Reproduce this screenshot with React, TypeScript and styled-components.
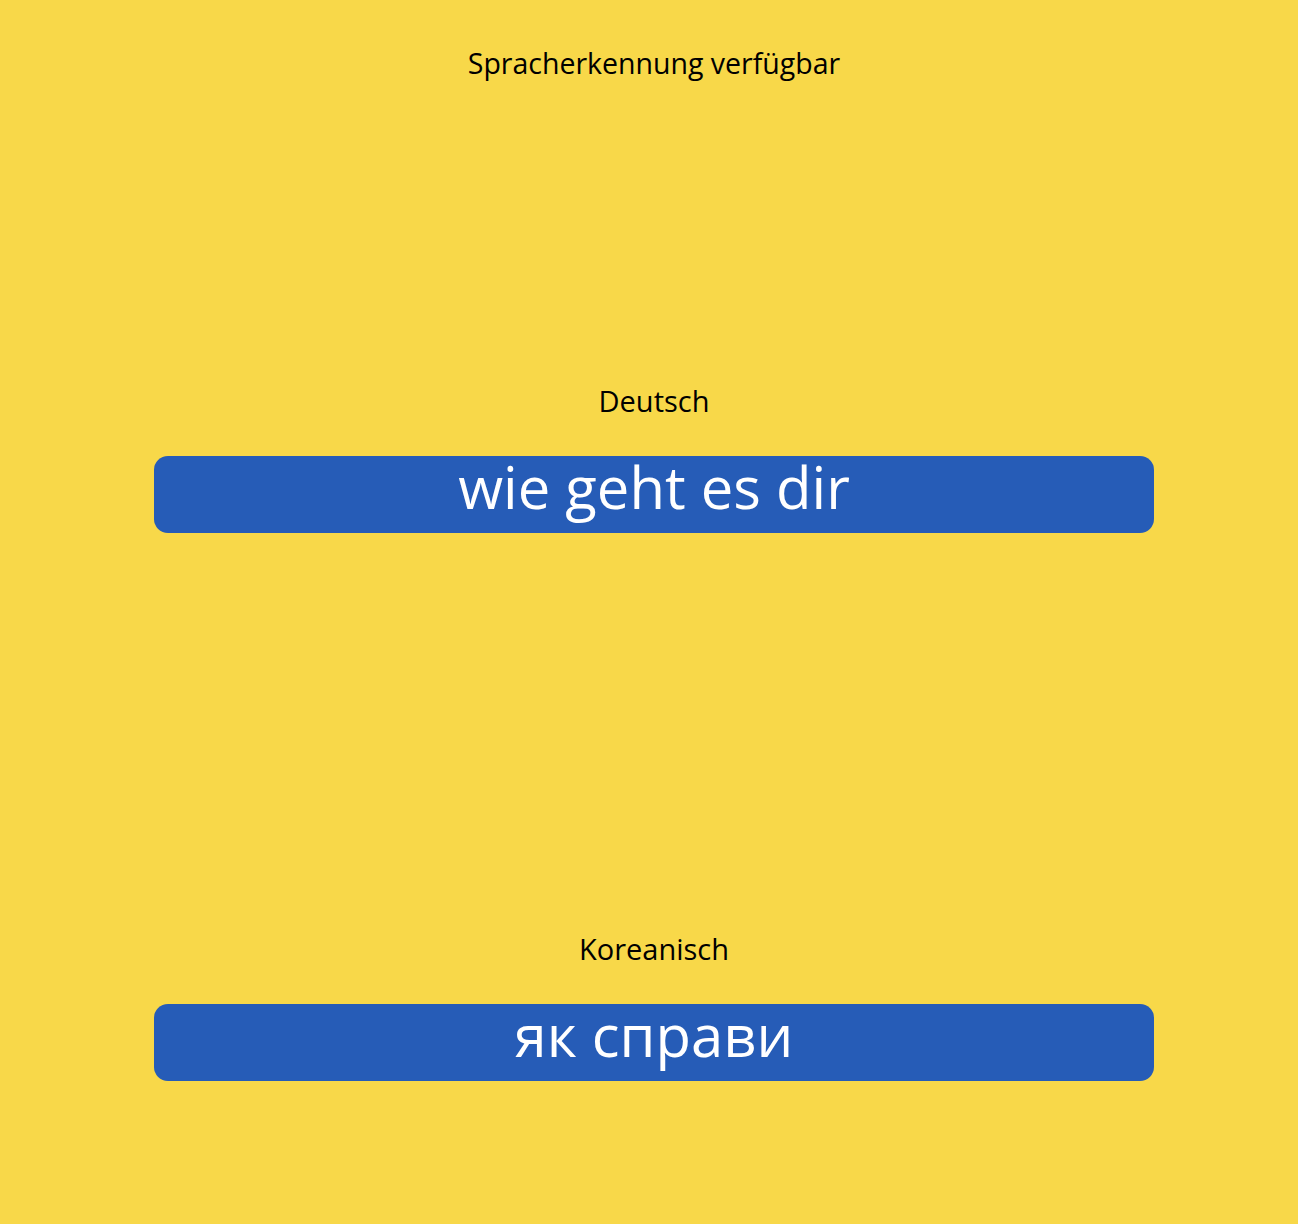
import styled, { createGlobalStyle } from 'styled-components'

const GlobalStyle = createGlobalStyle`
  html, body {
    margin: 0;
    padding: 0;
    background-color: #f8d849;
  }
  body {
    font-family: 'Open Sans', 'Noto Sans', 'Noto Sans CJK KR', sans-serif;
  }
`

const Page = styled.main`
  display: flex;
  flex-direction: column;
  align-items: center;
  min-height: 1224px;
  padding: 46px 0 0 10px;
  box-sizing: border-box;
  color: #000;
`

const Status = styled.h1`
  margin: 0;
  font-size: 28.5px;
  font-weight: 400;
  line-height: 34px;
`

const Section = styled.section<{ $gap: number }>`
  display: flex;
  flex-direction: column;
  align-items: center;
  gap: 38px;
  width: 1000px;
  margin-top: ${p => p.$gap}px;
`

const Label = styled.h2`
  margin: 0;
  font-size: 29px;
  font-weight: 400;
  line-height: 34px;
`

const Phrase = styled.div`
  width: 100%;
  height: 77px;
  border-radius: 14px;
  background-color: #265cb7;
  color: #fff;
  font-size: 58px;
  line-height: 62px;
  text-align: center;
`

const results = [
  { lang: 'Deutsch', text: 'wie geht es dir', gap: 304 },
  { lang: 'Koreanisch', text: 'як справи', gap: 399 },
]

export default function App() {
  return (
    <>
      <GlobalStyle />
      <Page>
        <Status>Spracherkennung verfügbar</Status>
        {results.map(r => (
          <Section key={r.lang} $gap={r.gap}>
            <Label>{r.lang}</Label>
            <Phrase>{r.text}</Phrase>
          </Section>
        ))}
      </Page>
    </>
  )
}
